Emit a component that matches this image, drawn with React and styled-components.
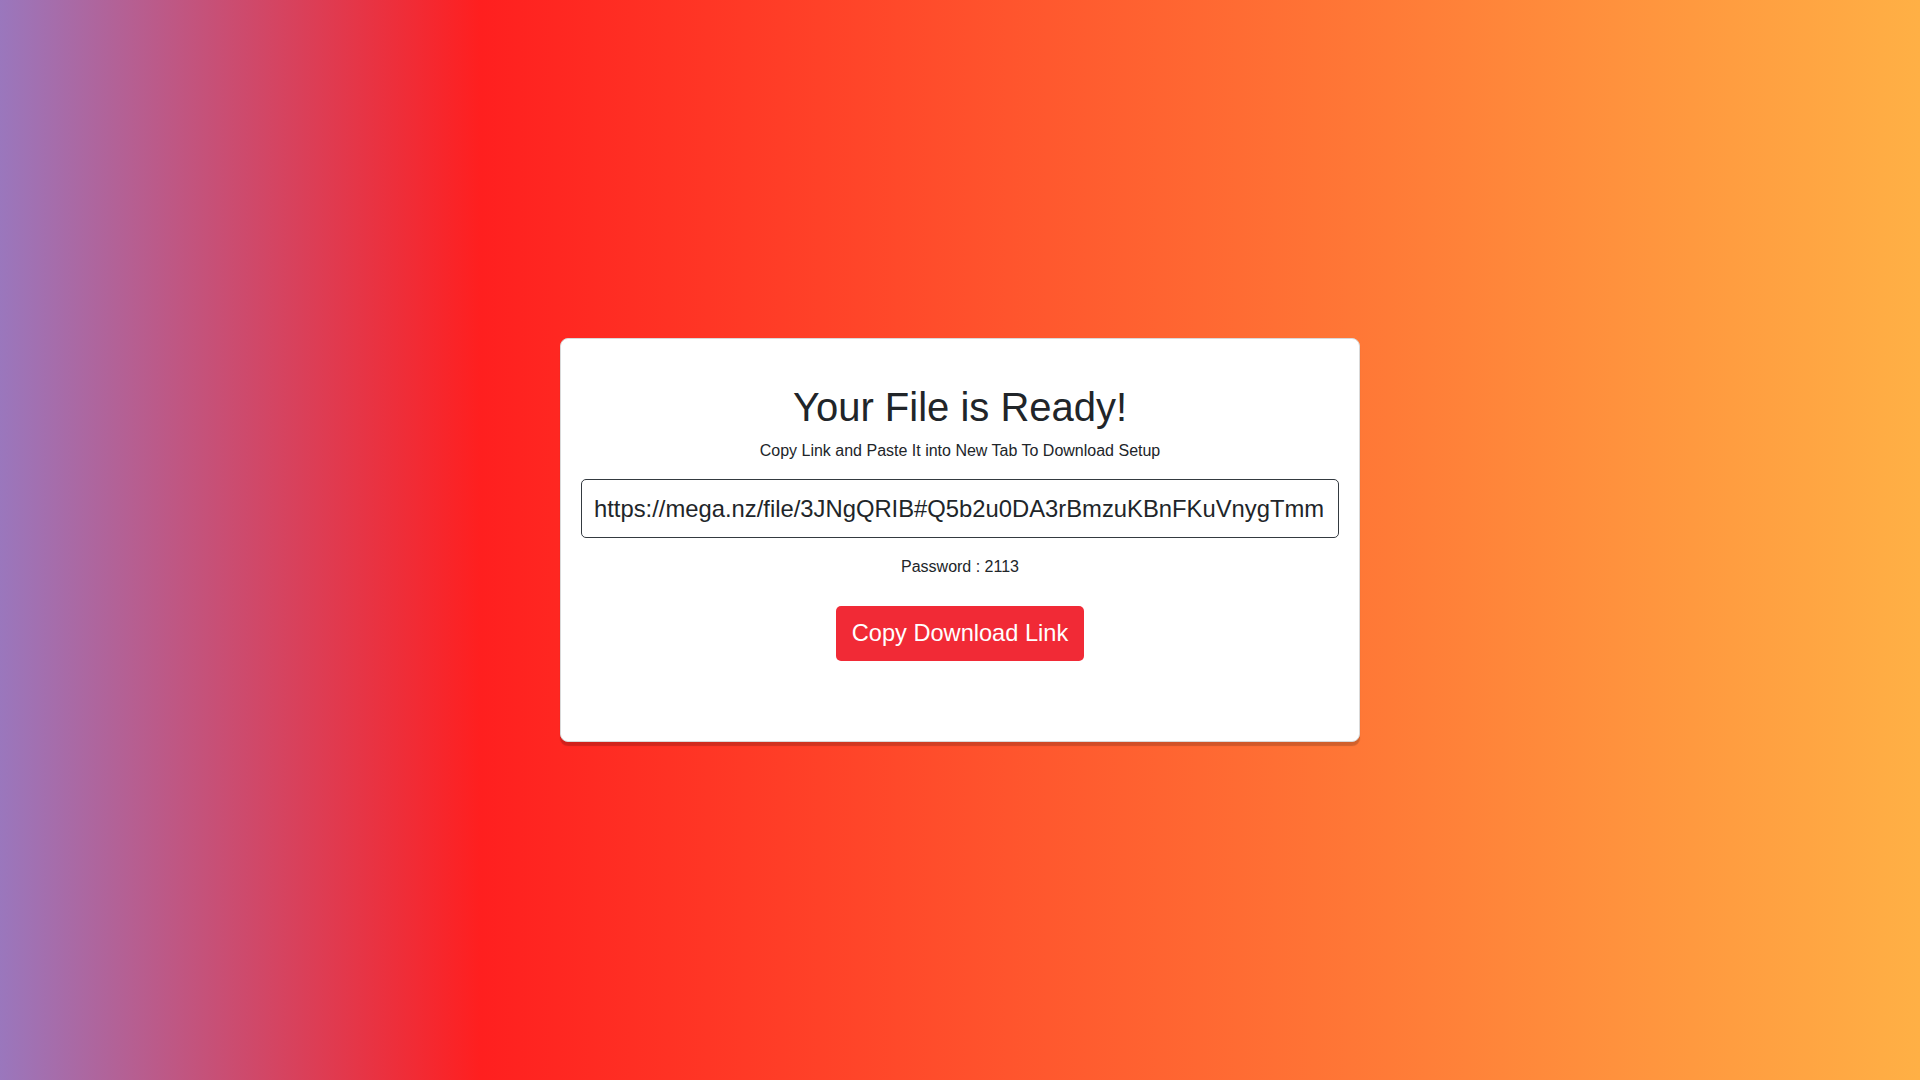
import React from "react";
import styled, { createGlobalStyle } from "styled-components";

const GlobalStyle = createGlobalStyle`
  html, body {
    margin: 0;
    padding: 0;
  }
  body {
    font-family: "Liberation Sans", Arial, sans-serif;
    color: #212529;
  }
`;

const downloadLink = "https://mega.nz/file/3JNgQRIB#Q5b2u0DA3rBmzuKBnFKuVnygTmm";

export default function App() {
  return (
    <Page>
      <GlobalStyle />
      <Card>
        <Title>Your File is Ready!</Title>
        <Subtitle>Copy Link and Paste It into New Tab To Download Setup</Subtitle>
        <LinkInput type="text" value={downloadLink} readOnly />
        <Password>Password : 2113</Password>
        <CopyButton type="button">Copy Download Link</CopyButton>
      </Card>
    </Page>
  );
}

const Page = styled.div`
  width: 100%;
  height: 100vh;
  display: flex;
  align-items: center;
  justify-content: center;
  background: linear-gradient(
    to right,
    #9a77bd 0%,
    #ff1f1f 25%,
    #ffb045 100%
  );
`;

const Card = styled.div`
  box-sizing: border-box;
  width: 800px;
  height: 404px;
  padding: 44px 20px 20px;
  background: #fff;
  border: 1px solid #d9d9d9;
  border-radius: 8px;
  box-shadow: 0 4px 1px rgba(0, 0, 0, 0.18);
  display: flex;
  flex-direction: column;
  align-items: center;
`;

const Title = styled.h1`
  margin: 0 0 8px;
  font-size: 40px;
  font-weight: 400;
  line-height: 1.2;
  color: #212529;
`;

const Subtitle = styled.p`
  margin: 0 0 16px;
  font-size: 16px;
  line-height: 1.5;
  color: #212529;
`;

const LinkInput = styled.input`
  box-sizing: border-box;
  width: 100%;
  height: 59px;
  padding: 0 11px 0 12px;
  font-family: "Liberation Sans", Arial, sans-serif;
  font-size: 23.8px;
  color: #212529;
  background: #fff;
  border: 1px solid #343a40;
  border-radius: 5px;
  outline: none;
`;

const Password = styled.p`
  margin: 17px 0 27px;
  font-size: 16px;
  line-height: 1.5;
  color: #212529;
`;

const CopyButton = styled.button`
  box-sizing: border-box;
  height: 55px;
  padding: 0 16px;
  font-family: "Liberation Sans", Arial, sans-serif;
  font-size: 23.6px;
  color: #fff;
  background: #f12a36;
  border: none;
  border-radius: 5px;
  cursor: pointer;
`;
